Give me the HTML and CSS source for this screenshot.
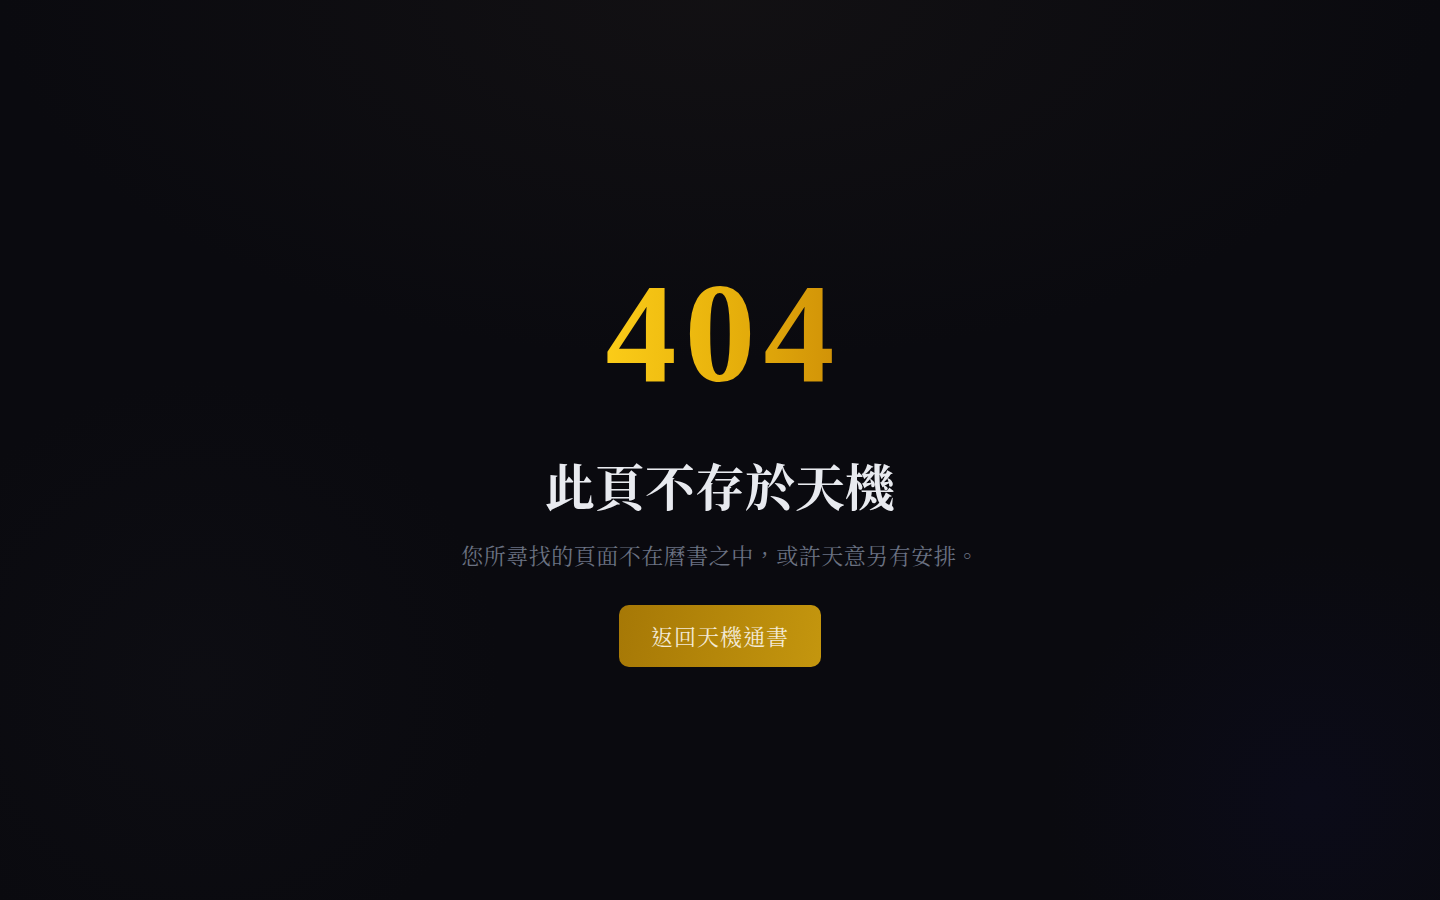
FILE: index.html
```html
<!DOCTYPE html>
<html lang="zh-Hant">
<head>
<meta charset="utf-8">
<title>404 · 此頁不存於天機</title>
<link rel="stylesheet" href="styles.css">
</head>
<body>
  <main class="page">
    <div class="code">404</div>
    <h1 class="title">此頁不存於天機</h1>
    <p class="lead">您所尋找的頁面不在曆書之中，或許天意另有安排。</p>
    <a class="home-btn" href="#">返回天機通書</a>
  </main>
</body>
</html>
```

FILE: styles.css
```css
* { box-sizing: border-box; }

html, body {
  margin: 0;
  height: 100%;
}

body {
  background-color: #0a0a0f;
  background-image:
    radial-gradient(ellipse 50% 40% at 50% 0%, rgba(20, 18, 20, 0.8), rgba(20, 18, 20, 0) 100%),
    radial-gradient(circle 260px at 1310px 800px, rgba(12, 12, 34, 0.5), rgba(12, 12, 34, 0) 100%),
    radial-gradient(circle 300px at 200px 680px, rgba(16, 16, 22, 0.5), rgba(16, 16, 22, 0) 100%);
  font-family: "Noto Serif CJK TC", "Liberation Serif", "Noto Sans CJK TC", serif;
  color: #e5e7eb;
}

.page {
  min-height: 100vh;
  display: flex;
  flex-direction: column;
  align-items: center;
  justify-content: center;
  text-align: center;
  padding: 24px 24px 0;
}

.code {
  font-family: "Liberation Serif", serif;
  font-weight: 700;
  font-size: 142px;
  line-height: 1;
  letter-spacing: 8px;
  margin: 5px -8px 50px 0;
  background: linear-gradient(90deg, #fbcc18 0%, #e8b20c 50%, #cf9007 100%);
  -webkit-background-clip: text;
  background-clip: text;
  color: transparent;
}

.title {
  font-size: 50px;
  font-weight: 700;
  line-height: 1.2;
  color: #e8eaef;
  margin: 0 0 24px;
}

.lead {
  font-size: 22px;
  letter-spacing: 0.5px;
  line-height: 1.5;
  color: #6b7282;
  margin: 0 0 34px;
}

.home-btn {
  display: inline-block;
  padding: 14px 32px;
  border-radius: 10px;
  background: linear-gradient(100deg, #a67806 0%, #c4960e 100%);
  color: #f3ead6;
  font-size: 22px;
  letter-spacing: 1px;
  line-height: 34px;
  text-decoration: none;
}
```
